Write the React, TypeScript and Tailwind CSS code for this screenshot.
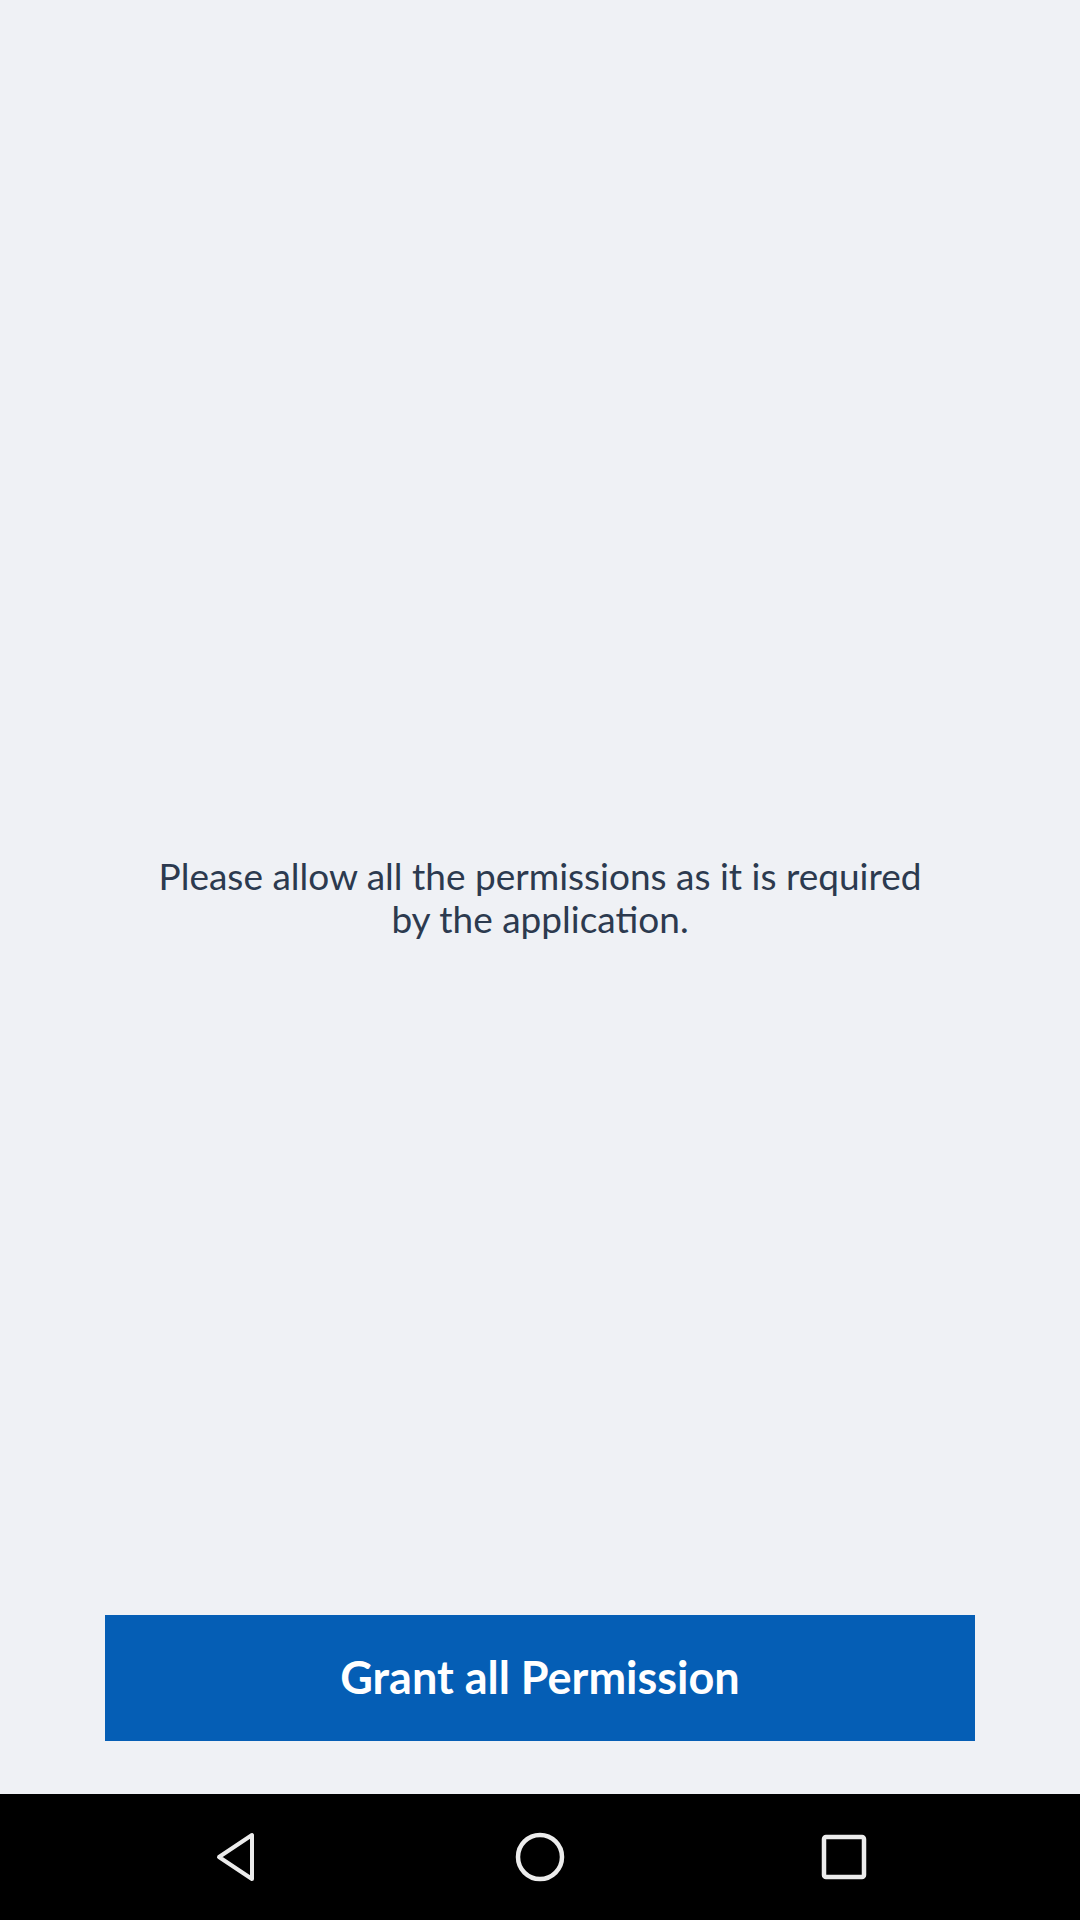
export default function App() {
  return (
    <div className="w-[1080px] h-[1920px] flex flex-col bg-[#eff1f5]" style={{ fontFamily: "Lato, 'Open Sans', sans-serif" }}>
      <div className="flex-1 flex flex-col">
        <div className="h-[179px]" />
        <div className="flex-1 flex items-center justify-center">
          <p className="max-w-[790px] text-center text-[37px] leading-[43px] text-[#2c3a4f]">
            Please allow all the permissions as it is required by the application.
          </p>
        </div>
        <div className="h-[179px] px-[105px] pb-[53px]">
          <button className="w-full h-[126px] bg-[#055eb5] text-white font-bold text-[45px] flex items-center justify-center">
            Grant all Permission
          </button>
        </div>
      </div>
      <div className="h-[126px] bg-black flex items-center justify-center">
        <div className="w-full flex items-center justify-between px-[213px]">
          <svg width="46" height="50" viewBox="0 0 46 50" className="block">
            <path d="M39 3 L39 47 L6 25 Z" fill="none" stroke="#ececec" strokeWidth="4" strokeLinejoin="round" />
          </svg>
          <svg width="50" height="50" viewBox="0 0 50 50" className="block">
            <circle cx="25" cy="25" r="22" fill="none" stroke="#ececec" strokeWidth="4.5" />
          </svg>
          <svg width="46" height="46" viewBox="0 0 46 46" className="block">
            <rect x="3" y="3" width="40" height="40" rx="2" fill="none" stroke="#ececec" strokeWidth="4.5" />
          </svg>
        </div>
      </div>
    </div>
  );
}
